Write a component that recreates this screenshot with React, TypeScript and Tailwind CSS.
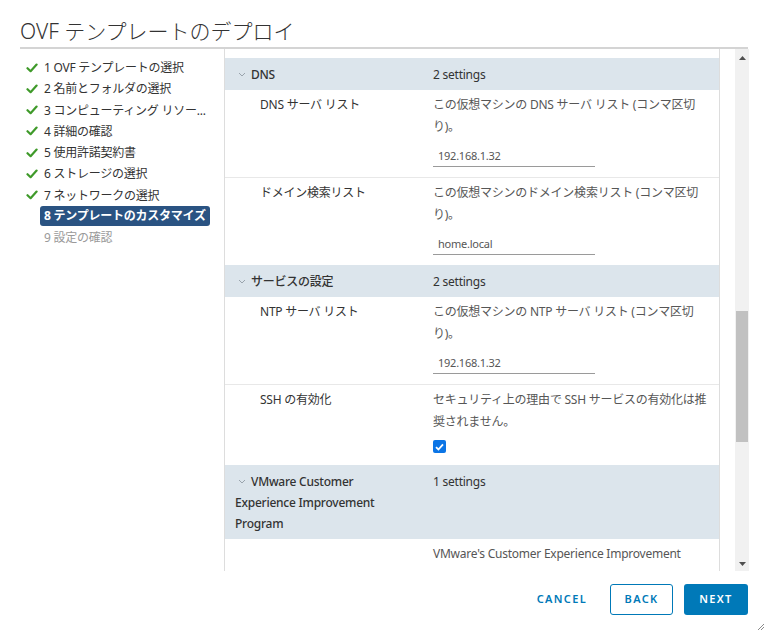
import React from 'react';

const navItems = [
  { label: '1 OVF テンプレートの選択', state: 'done' },
  { label: '2 名前とフォルダの選択', state: 'done' },
  { label: '3 コンピューティング リソー...', state: 'done' },
  { label: '4 詳細の確認', state: 'done' },
  { label: '5 使用許諾契約書', state: 'done' },
  { label: '6 ストレージの選択', state: 'done' },
  { label: '7 ネットワークの選択', state: 'done' },
  { label: '8 テンプレートのカスタマイズ', state: 'active' },
  { label: '9 設定の確認', state: 'todo' },
];

const Check = () => (
  <svg width="12" height="10" viewBox="0 0 12 10" className="shrink-0">
    <path d="M1.5 5.2 L4.6 8.2 L10.6 1.6" fill="none" stroke="#3f9a2a" strokeWidth="2.2" strokeLinecap="round" strokeLinejoin="round" />
  </svg>
);

const Chevron = () => (
  <svg width="8" height="5" viewBox="0 0 8 5" className="inline-block ml-[3px] mr-[5px] align-middle mb-[2px]">
    <path d="M1 1 L4 4 L7 1" fill="none" stroke="#9aa4ad" strokeWidth="1" />
  </svg>
);

const GroupHeader = ({ title, count }: { title: React.ReactNode; count: string }) => (
  <div className="flex bg-[#dce5ec] py-[5.5px] leading-[21px] text-[#333]">
    <div className="w-[208px] pl-[10px] font-medium">
      <Chevron />
      {title}
    </div>
    <div className="flex-1">{count}</div>
  </div>
);

const Field = ({ value }: { value: string }) => (
  <div className="mt-[6px] h-[23px] w-[162px] border-b border-[#9a9a9a] pl-[5px] pt-[3px] text-[11px] leading-[18px] text-[#565656]">
    {value}
  </div>
);

const SettingRow = ({
  label,
  lines,
  children,
  border,
}: {
  label: string;
  lines: string[];
  children?: React.ReactNode;
  border?: boolean;
}) => (
  <div className={`flex pt-[4px] ${border ? 'border-b border-[#e8e8e8]' : ''}`}>
    <div className="w-[208px] pl-[35px] leading-[22px] text-[#333]">{label}</div>
    <div className="flex-1 text-[#565656]">
      {lines.map((l) => (
        <div key={l} className="leading-[22px] whitespace-nowrap">
          {l}
        </div>
      ))}
      {children}
    </div>
  </div>
);

export default function App() {
  return (
    <div
      className="relative w-[768px] h-[634px] bg-white overflow-hidden text-[12px] tracking-[-0.02em]"
      style={{ fontFamily: '"Noto Sans", "Noto Sans CJK JP", sans-serif' }}
    >
      {/* Title */}
      <div className="px-5 pt-[16px]">
        <h1 className="text-[21px] font-light leading-[30px] text-[#333] tracking-normal">OVF テンプレートのデプロイ</h1>
        <div className="mt-[1px] h-[2px] bg-[#d4d4d4]" />
      </div>

      {/* Body */}
      <div className="flex h-[522px]">
        <nav className="w-[225px] border-r border-[#dddddd] pl-[26px] pt-[8px]">
          {navItems.map((item) => (
            <div key={item.label} className="flex items-center h-[21.25px]">
              <div className="w-[18px] flex items-center">{item.state === 'done' && <Check />}</div>
              {item.state === 'active' ? (
                <span className="ml-[-4px] px-[4px] rounded-[3px] bg-[#2a5382] text-white font-bold leading-[20px] whitespace-nowrap">
                  {item.label}
                </span>
              ) : (
                <span className={`whitespace-nowrap leading-[21px] ${item.state === 'todo' ? 'text-[#9a9a9a]' : 'text-[#333]'}`}>
                  {item.label}
                </span>
              )}
            </div>
          ))}
        </nav>

        <div className="flex-1 flex">
          <div className="w-[495px] border-r border-[#dddddd] pt-[9px] overflow-hidden">
            <GroupHeader title="DNS" count="2 settings" />
            <SettingRow label="DNS サーバ リスト" lines={['この仮想マシンの DNS サーバ リスト (コンマ区切', 'り)。']} border>
              <Field value="192.168.1.32" />
              <div className="h-[10px]" />
            </SettingRow>
            <SettingRow label="ドメイン検索リスト" lines={['この仮想マシンのドメイン検索リスト (コンマ区切', 'り)。']}>
              <Field value="home.local" />
              <div className="h-[10px]" />
            </SettingRow>

            <GroupHeader title="サービスの設定" count="2 settings" />
            <SettingRow label="NTP サーバ リスト" lines={['この仮想マシンの NTP サーバ リスト (コンマ区切', 'り)。']} border>
              <Field value="192.168.1.32" />
              <div className="h-[10px]" />
            </SettingRow>
            <SettingRow label="SSH の有効化" lines={['セキュリティ上の理由で SSH サービスの有効化は推', '奨されません。']}>
              <div className="mt-[7px] w-[13px] h-[13px] rounded-[2px] bg-[#0b75e6] flex items-center justify-center">
                <svg width="9" height="8" viewBox="0 0 9 8">
                  <path d="M1 4.2 L3.4 6.5 L8 1.3" fill="none" stroke="white" strokeWidth="1.8" />
                </svg>
              </div>
              <div className="h-[12px]" />
            </SettingRow>

            <GroupHeader
              title={
                <>
                  VMware Customer
                  <br />
                  Experience Improvement
                  <br />
                  Program
                </>
              }
              count="1 settings"
            />
            <SettingRow label="" lines={["VMware's Customer Experience Improvement"]} />
          </div>

          <div className="ml-[15px] w-[14px] bg-[#f1f1f1] flex flex-col items-center">
            <svg width="7" height="4" viewBox="0 0 7 4" className="mt-[7px]">
              <path d="M0 4 L3.5 0 L7 4 Z" fill="#505050" />
            </svg>
            <div className="mt-[251px] h-[131px] w-[12px] bg-[#c1c1c1]" />
            <div className="flex-1" />
            <svg width="7" height="4" viewBox="0 0 7 4" className="mb-[5px]">
              <path d="M0 0 L3.5 4 L7 0 Z" fill="#505050" />
            </svg>
          </div>
        </div>
      </div>

      {/* Footer */}
      <div className="flex justify-end pr-5 pt-[13px] gap-[11px]">
        <button className="h-[31px] px-3 text-[11px] font-semibold tracking-[0.12em] text-[#0079b8]">CANCEL</button>
        <button className="h-[31px] w-[63px] rounded-[3px] border border-[#0079b8] text-[11px] font-semibold tracking-[0.12em] text-[#0079b8]">
          BACK
        </button>
        <button className="h-[31px] w-[64px] rounded-[3px] bg-[#0079b8] text-[11px] font-semibold tracking-[0.12em] text-white">
          NEXT
        </button>
      </div>

      <svg width="8" height="8" viewBox="0 0 8 8" className="absolute right-[3px] bottom-[3px]">
        <path d="M7 1 L1 7 M7 4 L4 7" stroke="#8a8a8a" strokeWidth="1" />
      </svg>
    </div>
  );
}
